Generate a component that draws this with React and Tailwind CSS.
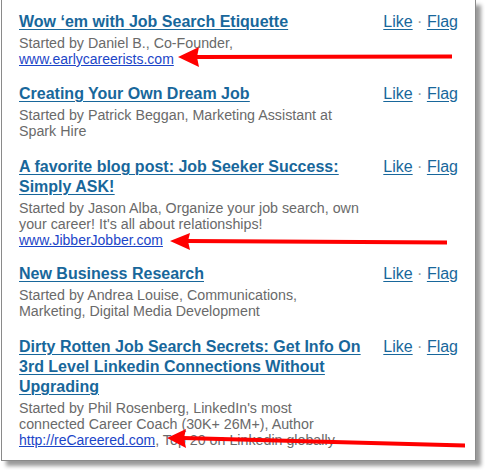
const discussions = [
  {
    id: 1,
    title: ["Wow \u2018em with Job Search Etiquette"],
    about: ["Started by Daniel B., Co-Founder,"],
    link: "www.earlycareerists.com",
    gap: "mt-0",
  },
  {
    id: 2,
    title: ["Creating Your Own Dream Job"],
    about: ["Started by Patrick Beggan, Marketing Assistant at", "Spark Hire"],
    gap: "mt-[17px]",
  },
  {
    id: 3,
    title: ["A favorite blog post: Job Seeker Success:", "Simply ASK!"],
    about: [
      "Started by Jason Alba, Organize your job search, own",
      "your career! It's all about relationships!",
    ],
    link: "www.JibberJobber.com",
    gap: "mt-[18px]",
  },
  {
    id: 4,
    title: ["New Business Research"],
    about: ["Started by Andrea Louise, Communications,", "Marketing, Digital Media Development"],
    gap: "mt-4",
  },
  {
    id: 5,
    title: [
      "Dirty Rotten Job Search Secrets: Get Info On",
      "3rd Level Linkedin Connections Without",
      "Upgrading",
    ],
    about: [
      "Started by Phil Rosenberg, LinkedIn's most",
      "connected Career Coach (30K+ 26M+), Author",
    ],
    link: "http://reCareered.com",
    tail: ", Top 20 on Linkedin globally",
    gap: "mt-[18px]",
  },
];

const Arrow = ({ tip, back, y1, y2, end, endY }) => (
  <g fill="#ff0000">
    <polygon points={`${back - 3},${tip[1] - 2} ${end},${endY - 2} ${end},${endY + 2} ${back - 3},${tip[1] + 2}`} />
    <polygon points={`${tip[0]},${tip[1]} ${back},${y1} ${back - 2},${tip[1]} ${back},${y2}`} />
  </g>
);

const App = () => {
  return (
    <div className="relative w-[485px] h-[470px] bg-white overflow-hidden font-['Liberation_Sans',Arial,sans-serif]">
      <div className="ml-px w-[475px] h-[461px] border-x border-b border-[#8a8a8a] bg-white shadow-[5px_5px_4px_rgba(0,0,0,0.4)] pl-[17px] pr-[17px] pt-3">
        {discussions.map((item) => (
          <div key={item.id} className={`flex justify-between ${item.gap}`}>
            <div>
              <a href="#" className="block text-[16px] leading-5 font-bold text-[#18679b] underline underline-offset-2 decoration-1 whitespace-nowrap">
                {item.title.map((line, i) => (
                  <span key={i} className="block w-fit underline">
                    {line}
                  </span>
                ))}
              </a>
              <div className="mt-[3px] text-[14.25px] leading-4 text-[#6a6a6a] whitespace-nowrap">
                {item.about.map((line, i) => (
                  <div key={i}>{line}</div>
                ))}
                {item.link && (
                  <div>
                    <a href="#" className="text-[14px] text-[#1b45c8] underline underline-offset-1">
                      {item.link}
                    </a>
                    {item.tail}
                  </div>
                )}
              </div>
            </div>
            <div className="text-[16px] leading-5 text-[#18679b] whitespace-nowrap">
              <a href="#" className="underline underline-offset-2">Like</a>
              <span className="text-[#9a9a9a]"> · </span>
              <a href="#" className="underline underline-offset-2">Flag</a>
            </div>
          </div>
        ))}
      </div>

      <svg className="absolute inset-0 pointer-events-none" width="485" height="470" viewBox="0 0 485 470">
        <Arrow tip={[178, 57]} back={199} y1={47} y2={67} end={452} endY={56.5} />
        <Arrow tip={[170, 241]} back={190} y1={233} y2={250} end={447} endY={242.5} />
        <Arrow tip={[167, 438]} back={186} y1={429} y2={448} end={465} endY={445.5} />
      </svg>
    </div>
  );
};

export default App;
